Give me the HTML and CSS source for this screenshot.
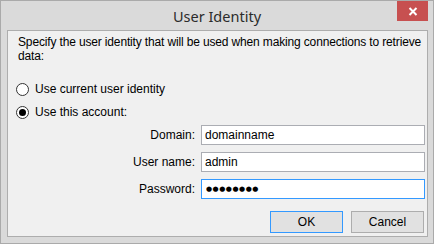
FILE: index.html
```html
<!DOCTYPE html>
<html lang="en">
<head>
    <meta charset="UTF-8">
    <title>User Identity</title>
    <link rel="stylesheet" href="styles.css">
</head>
<body>
    <div class="window">
        <div class="titlebar">
            <span></span>
            <span class="title">User Identity</span>
            <button class="close-btn" type="button">
                <svg width="10" height="9" viewBox="0 0 10 9">
                    <path d="M1.5 1 L8.5 8 M8.5 1 L1.5 8" stroke="#ffffff" stroke-width="2" fill="none"/>
                </svg>
            </button>
        </div>
        <div class="client">
            <p class="intro">Specify the user identity that will be used when making connections to retrieve data:</p>

            <label class="radio-row first">
                <span class="radio"></span>
                <span>Use current user identity</span>
            </label>
            <label class="radio-row">
                <span class="radio checked"></span>
                <span>Use this account:</span>
            </label>

            <div class="fields">
                <div class="field-row">
                    <label for="domain">Domain:</label>
                    <input type="text" id="domain" value="domainname">
                </div>
                <div class="field-row">
                    <label for="username">User name:</label>
                    <input type="text" id="username" value="admin">
                </div>
                <div class="field-row">
                    <label for="password">Password:</label>
                    <!-- masked value drawn as text so the dots match the native size -->
                    <input type="text" id="password" class="focused masked" value="●●●●●●●●">
                </div>
            </div>

            <div class="buttons">
                <button type="button" class="btn default">OK</button>
                <button type="button" class="btn">Cancel</button>
            </div>
        </div>
    </div>
</body>
</html>
```

FILE: styles.css
```css
* {
    box-sizing: border-box;
}

body {
    margin: 0;
    font-family: "Liberation Sans", Arial, sans-serif;
    font-size: 12px;
    color: #000;
    background: #dadada;
}

.window {
    width: 434px;
    height: 244px;
    border: 1px solid #aaaaaa;
    background: #dadada;
    display: flex;
    flex-direction: column;
}

.titlebar {
    height: 29px;
    display: grid;
    grid-template-columns: 1fr auto 1fr;
    align-items: start;
}

.title {
    font-family: "Noto Sans", "Liberation Sans", sans-serif;
    font-size: 14.5px;
    line-height: 20px;
    margin-top: 5px;
    color: #2b2b2b;
}

.close-btn {
    justify-self: end;
    margin-right: 5px;
    width: 31px;
    height: 20px;
    border: none;
    padding: 0;
    background: #c75050;
    display: flex;
    align-items: center;
    justify-content: center;
}

.client {
    flex: 1;
    margin: 0 5px 6px 6px;
    border: 1px solid #adadad;
    background: #f0f0f0;
    padding: 4px 2px 0 10px;
    display: flex;
    flex-direction: column;
}

.intro {
    margin: 0;
    line-height: 14px;
    letter-spacing: -0.15px;
}

.radio-row {
    display: flex;
    align-items: center;
    gap: 6px;
    height: 16px;
    margin-top: 7px;
}

.radio-row.first {
    margin-top: 18px;
}

.radio {
    width: 13px;
    height: 13px;
    margin-left: -2px;
    border-radius: 50%;
    border: 1px solid #333333;
    background: #ffffff;
    display: flex;
    align-items: center;
    justify-content: center;
}

.radio.checked::after {
    content: "";
    width: 7px;
    height: 7px;
    border-radius: 50%;
    background: #000000;
}

.fields {
    margin-top: 5px;
    display: flex;
    flex-direction: column;
    gap: 7px;
}

.field-row {
    display: flex;
    align-items: center;
    justify-content: flex-end;
    gap: 6px;
}

.field-row input {
    width: 224px;
    height: 20px;
    border: 1px solid #abadb3;
    background: #ffffff;
    padding: 0 3px;
    font-family: "Liberation Sans", Arial, sans-serif;
    font-size: 12px;
    color: #000;
    outline: none;
}

.field-row input.focused {
    border-color: #3399ff;
}

.field-row input.masked {
    font-family: "DejaVu Sans", sans-serif;
    font-size: 7px;
    letter-spacing: 0.5px;
    padding-left: 4px;
}

.buttons {
    margin-top: 12px;
    display: flex;
    justify-content: flex-end;
    gap: 8px;
    padding-right: 1px;
}

.btn {
    width: 73px;
    height: 22px;
    border: 1px solid #adadad;
    background: #e1e1e1;
    font-family: "Liberation Sans", Arial, sans-serif;
    font-size: 12px;
    color: #000;
    padding: 0;
}

.btn.default {
    border-color: #3399ff;
}
```
